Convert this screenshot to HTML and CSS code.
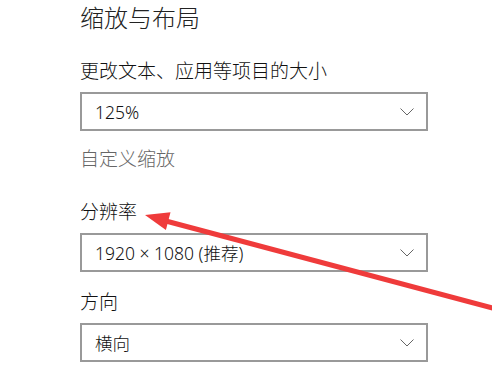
FILE: index.html
```html
<!DOCTYPE html>
<html lang="zh-CN">
<head>
  <meta charset="UTF-8" />
  <title>缩放与布局</title>
  <link rel="stylesheet" href="styles.css">
</head>
<body>
  <div class="page">
    <h1>缩放与布局</h1>

    <div class="label first">更改文本、应用等项目的大小</div>
    <div class="select">
      <span>125%</span>
      <svg class="chev" width="14" height="8" viewBox="0 0 14 8"><path d="M0.5 0.5 L7 7 L13.5 0.5" fill="none" stroke="#666" stroke-width="1"/></svg>
    </div>
    <div class="link">自定义缩放</div>

    <div class="label res">分辨率</div>
    <div class="select">
      <span>1920 × 1080 (推荐)</span>
      <svg class="chev" width="14" height="8" viewBox="0 0 14 8"><path d="M0.5 0.5 L7 7 L13.5 0.5" fill="none" stroke="#666" stroke-width="1"/></svg>
    </div>

    <div class="label dir">方向</div>
    <div class="select">
      <span>横向</span>
      <svg class="chev" width="14" height="8" viewBox="0 0 14 8"><path d="M0.5 0.5 L7 7 L13.5 0.5" fill="none" stroke="#666" stroke-width="1"/></svg>
    </div>
  </div>

  <!-- red annotation arrow pointing at 分辨率 -->
  <svg class="arrow" width="492" height="380" viewBox="0 0 492 380">
    <line x1="164" y1="220.5" x2="500" y2="310" stroke="#ef3b3b" stroke-width="5"/>
    <polygon points="145,215 165.9,230 170.5,212.2" fill="#ef3b3b"/>
  </svg>
</body>
</html>
```

FILE: styles.css
```css
body {
  margin: 0;
  background: #fff;
  font-family: "Noto Sans", "Noto Sans CJK SC", sans-serif;
  font-weight: 300;
  color: #111;
  overflow: hidden;
}

.page {
  padding: 2px 0 0 80px;
}

h1 {
  margin: 0;
  font-size: 24px;
  line-height: 32px;
  font-weight: 300;
  color: #222;
}

.label {
  font-size: 19px;
  line-height: 26px;
  margin-bottom: 8px;
}

.label.first {
  margin-top: 24px;
}

.label.res {
  margin-top: 27px;
}

.label.dir {
  margin-top: 17px;
}

.link {
  font-size: 19px;
  line-height: 26px;
  margin-top: 15px;
  color: #666;
}

.select {
  width: 319px;
  height: 35px;
  border: 2px solid #999;
  display: flex;
  align-items: center;
  justify-content: space-between;
  padding: 0 12px 0 13px;
  font-size: 17.5px;
}

.chev {
  display: block;
}

.arrow {
  position: absolute;
  left: 0;
  top: 0;
}
```
